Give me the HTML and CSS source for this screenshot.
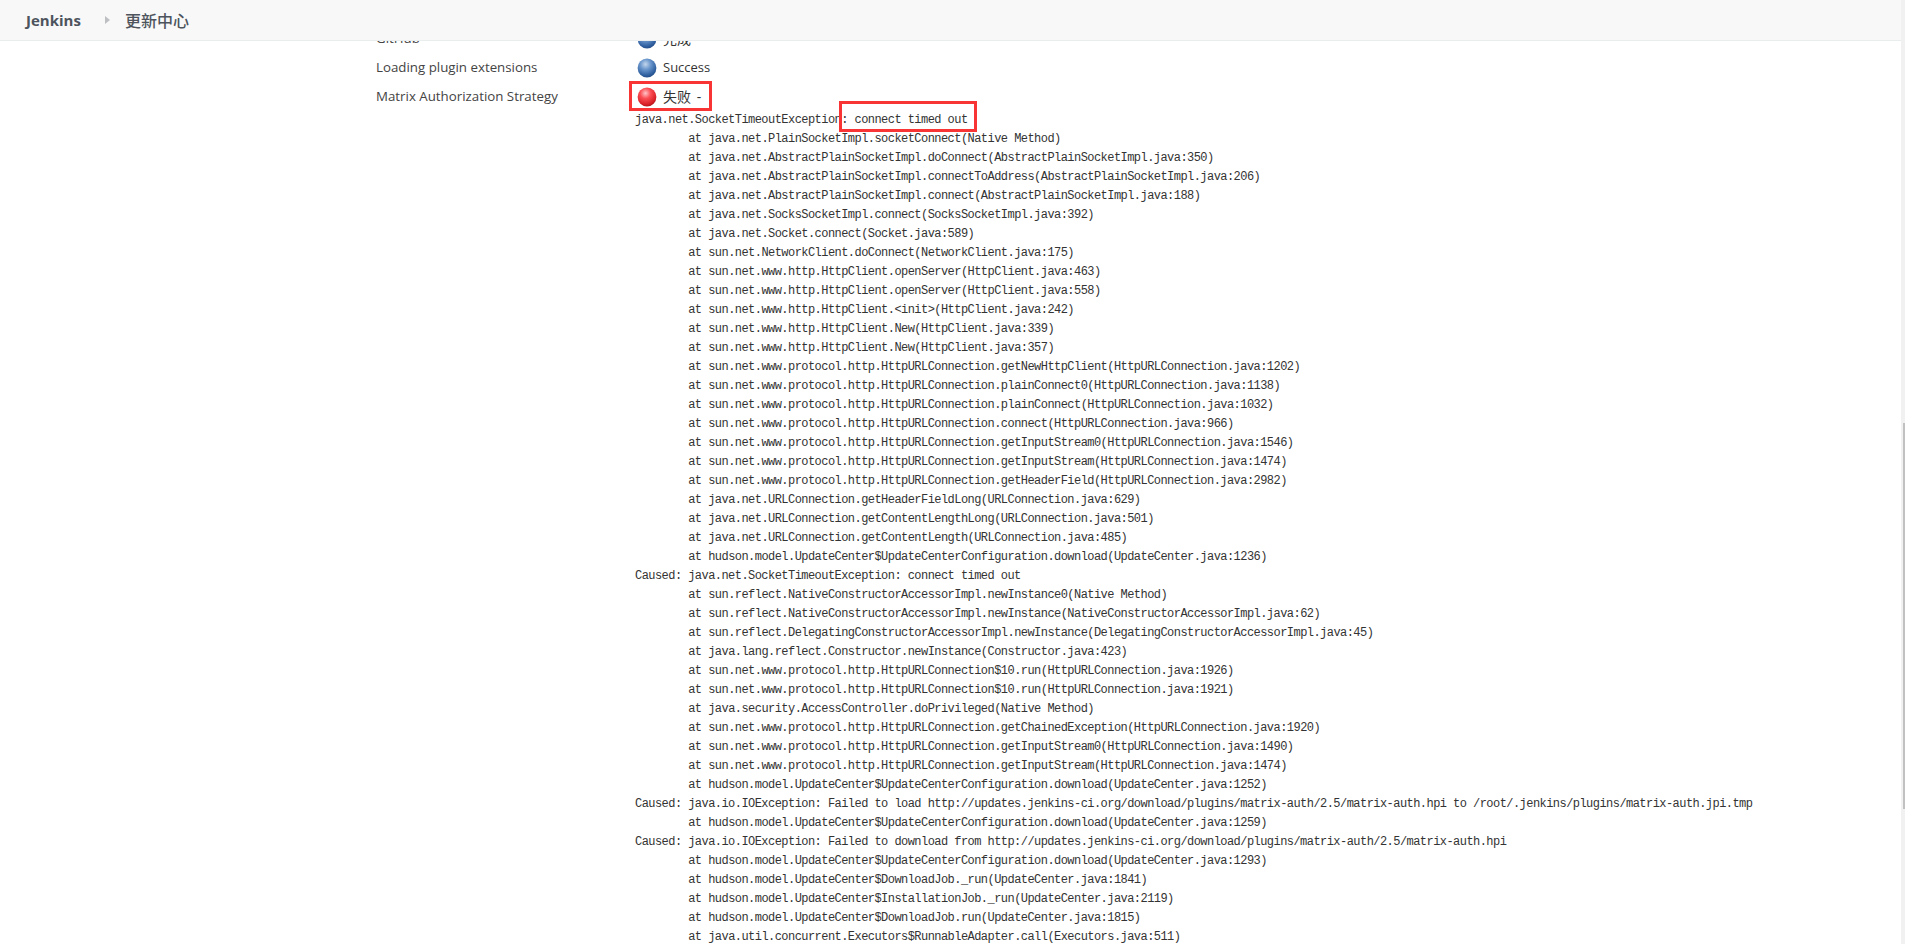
FILE: index.html
```html
<!DOCTYPE html>
<html lang="zh-CN">
<head>
<meta charset="utf-8">
<title>更新中心 [Jenkins]</title>
<link rel="stylesheet" href="styles.css">
</head>
<body>
<svg class="defs" width="0" height="0" aria-hidden="true">
  <defs>
    <radialGradient id="blue" cx="42%" cy="30%" r="70%">
      <stop offset="0" stop-color="#c3d6ec"/>
      <stop offset="0.4" stop-color="#6b97cc"/>
      <stop offset="0.85" stop-color="#2f5f9f"/>
      <stop offset="1" stop-color="#27508a"/>
    </radialGradient>
    <radialGradient id="red" cx="42%" cy="30%" r="70%">
      <stop offset="0" stop-color="#ffc4c8"/>
      <stop offset="0.4" stop-color="#fb4f55"/>
      <stop offset="0.85" stop-color="#d81f26"/>
      <stop offset="1" stop-color="#b5181e"/>
    </radialGradient>
  </defs>
</svg>
<div class="window">
  <div class="main">
    <header class="topbar">
      <a class="brand">Jenkins</a>
      <svg class="crumb-arrow" width="6" height="10" viewBox="0 0 6 10"><path d="M0 1l5 4-5 4z" fill="#bdbfc2"/></svg>
      <span class="crumb">更新中心</span>
    </header>
    <div class="content">
      <div class="row">
        <div class="label">GitHub</div>
        <div class="status"><svg class="ball" viewBox="0 0 20 20"><circle cx="10" cy="10" r="9.4" fill="url(#blue)"/></svg><span class="zh">完成</span></div>
      </div>
      <div class="row">
        <div class="label">Loading plugin extensions</div>
        <div class="status"><svg class="ball" viewBox="0 0 20 20"><circle cx="10" cy="10" r="9.4" fill="url(#blue)"/></svg><span>Success</span></div>
      </div>
      <div class="row">
        <div class="label">Matrix Authorization Strategy</div>
        <div class="status status-failed"><svg class="ball" viewBox="0 0 20 20"><circle cx="10" cy="10" r="9.4" fill="url(#red)"/></svg><span class="zh">失败 -</span>
          <div class="mark mark-status"></div>
          <div class="mark mark-message"></div>
        </div>
      </div>
      <pre class="trace">java.net.SocketTimeoutException: connect timed out
	at java.net.PlainSocketImpl.socketConnect(Native Method)
	at java.net.AbstractPlainSocketImpl.doConnect(AbstractPlainSocketImpl.java:350)
	at java.net.AbstractPlainSocketImpl.connectToAddress(AbstractPlainSocketImpl.java:206)
	at java.net.AbstractPlainSocketImpl.connect(AbstractPlainSocketImpl.java:188)
	at java.net.SocksSocketImpl.connect(SocksSocketImpl.java:392)
	at java.net.Socket.connect(Socket.java:589)
	at sun.net.NetworkClient.doConnect(NetworkClient.java:175)
	at sun.net.www.http.HttpClient.openServer(HttpClient.java:463)
	at sun.net.www.http.HttpClient.openServer(HttpClient.java:558)
	at sun.net.www.http.HttpClient.&lt;init&gt;(HttpClient.java:242)
	at sun.net.www.http.HttpClient.New(HttpClient.java:339)
	at sun.net.www.http.HttpClient.New(HttpClient.java:357)
	at sun.net.www.protocol.http.HttpURLConnection.getNewHttpClient(HttpURLConnection.java:1202)
	at sun.net.www.protocol.http.HttpURLConnection.plainConnect0(HttpURLConnection.java:1138)
	at sun.net.www.protocol.http.HttpURLConnection.plainConnect(HttpURLConnection.java:1032)
	at sun.net.www.protocol.http.HttpURLConnection.connect(HttpURLConnection.java:966)
	at sun.net.www.protocol.http.HttpURLConnection.getInputStream0(HttpURLConnection.java:1546)
	at sun.net.www.protocol.http.HttpURLConnection.getInputStream(HttpURLConnection.java:1474)
	at sun.net.www.protocol.http.HttpURLConnection.getHeaderField(HttpURLConnection.java:2982)
	at java.net.URLConnection.getHeaderFieldLong(URLConnection.java:629)
	at java.net.URLConnection.getContentLengthLong(URLConnection.java:501)
	at java.net.URLConnection.getContentLength(URLConnection.java:485)
	at hudson.model.UpdateCenter$UpdateCenterConfiguration.download(UpdateCenter.java:1236)
Caused: java.net.SocketTimeoutException: connect timed out
	at sun.reflect.NativeConstructorAccessorImpl.newInstance0(Native Method)
	at sun.reflect.NativeConstructorAccessorImpl.newInstance(NativeConstructorAccessorImpl.java:62)
	at sun.reflect.DelegatingConstructorAccessorImpl.newInstance(DelegatingConstructorAccessorImpl.java:45)
	at java.lang.reflect.Constructor.newInstance(Constructor.java:423)
	at sun.net.www.protocol.http.HttpURLConnection$10.run(HttpURLConnection.java:1926)
	at sun.net.www.protocol.http.HttpURLConnection$10.run(HttpURLConnection.java:1921)
	at java.security.AccessController.doPrivileged(Native Method)
	at sun.net.www.protocol.http.HttpURLConnection.getChainedException(HttpURLConnection.java:1920)
	at sun.net.www.protocol.http.HttpURLConnection.getInputStream0(HttpURLConnection.java:1490)
	at sun.net.www.protocol.http.HttpURLConnection.getInputStream(HttpURLConnection.java:1474)
	at hudson.model.UpdateCenter$UpdateCenterConfiguration.download(UpdateCenter.java:1252)
Caused: java.io.IOException: Failed to load http://updates.jenkins-ci.org/download/plugins/matrix-auth/2.5/matrix-auth.hpi to /root/.jenkins/plugins/matrix-auth.jpi.tmp
	at hudson.model.UpdateCenter$UpdateCenterConfiguration.download(UpdateCenter.java:1259)
Caused: java.io.IOException: Failed to download from http://updates.jenkins-ci.org/download/plugins/matrix-auth/2.5/matrix-auth.hpi
	at hudson.model.UpdateCenter$UpdateCenterConfiguration.download(UpdateCenter.java:1293)
	at hudson.model.UpdateCenter$DownloadJob._run(UpdateCenter.java:1841)
	at hudson.model.UpdateCenter$InstallationJob._run(UpdateCenter.java:2119)
	at hudson.model.UpdateCenter$DownloadJob.run(UpdateCenter.java:1815)
	at java.util.concurrent.Executors$RunnableAdapter.call(Executors.java:511)</pre>
    </div>
  </div>
  <div class="scrollbar"><div class="thumb"></div></div>
</div>
</body>
</html>
```

FILE: styles.css
```css
html, body {
  margin: 0;
  height: 100%;
  overflow: hidden;
  background: #fff;
}
body {
  font-family: "Open Sans", "Noto Sans CJK SC", sans-serif;
  color: #333;
}
.defs {
  position: absolute;
}
.window {
  display: flex;
  height: 100vh;
}
.main {
  flex: 1;
  min-width: 0;
  display: flex;
  flex-direction: column;
  overflow: hidden;
}
.topbar {
  position: relative;
  z-index: 2;
  flex: none;
  box-sizing: border-box;
  height: 41px;
  display: flex;
  align-items: center;
  padding-left: 26px;
  background: #f8f8f8;
  border-bottom: 1px solid #e9eded;
  color: #4d545d;
}
.brand {
  font-size: 15px;
  font-weight: 700;
  width: 79px;
}
.crumb-arrow {
  margin-right: 14px;
}
.crumb {
  font-size: 16px;
  font-weight: 500;
}
.content {
  margin-top: -17px;
  padding-left: 376px;
  font-size: 13px;
  line-height: 29px;
}
.row {
  display: grid;
  grid-template-columns: 258px 1fr;
  height: 29px;
}
.label {
  font-size: 13.3px;
  color: #444;
  white-space: nowrap;
}
.status {
  position: relative;
  display: flex;
  align-items: center;
  gap: 6px;
  padding-left: 3px;
}
.zh {
  font-size: 14px;
  word-spacing: 2px;
}
.ball {
  width: 20px;
  height: 20px;
  flex: none;
}
.mark {
  position: absolute;
  box-sizing: border-box;
  border: 3px solid #f83434;
}
.mark-status {
  left: -5px;
  top: -1px;
  width: 83px;
  height: 30px;
}
.mark-message {
  left: 205px;
  top: 19px;
  width: 138px;
  height: 31px;
}
.trace {
  margin: 0 0 0 259px;
  font-family: "Liberation Mono", "Noto Sans CJK SC", monospace;
  font-size: 12px;
  letter-spacing: -0.55px;
  line-height: 19px;
  tab-size: 8;
  color: #333;
}
.scrollbar {
  flex: none;
  box-sizing: border-box;
  width: 4px;
  height: 100%;
  padding: 423px 0 0 2px;
  background: #f1f1f1;
}
.thumb {
  height: 386px;
  background: #c1c1c1;
}
```
